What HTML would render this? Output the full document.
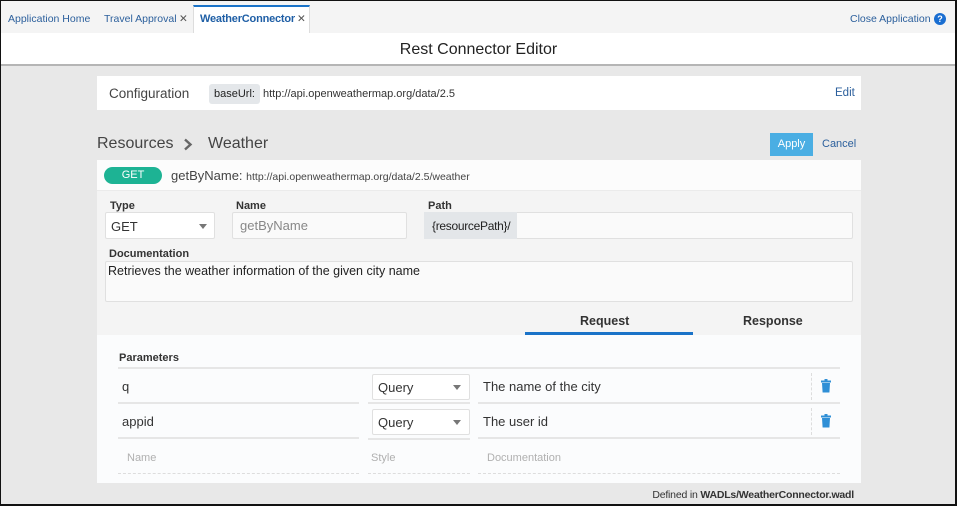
<!DOCTYPE html>
<html><head><style>
*{box-sizing:border-box;margin:0;padding:0}
body{width:957px;height:506px;overflow:hidden;font-family:"Liberation Sans",Arial,sans-serif;background:#e8e8e8;position:relative;color:#333}
.a{position:absolute;white-space:nowrap}
.frame{position:absolute;left:0;top:0;width:957px;height:506px;border:1px solid #111;border-right-width:2px;border-bottom-width:2px;pointer-events:none}
.tabs{left:0;top:0;width:957px;height:33px;background:#f4f4f4}
.tab{position:absolute;top:13px;font-size:10.5px;color:#2b5f9c;white-space:nowrap}
.inp{position:absolute;background:#fafafa;border:1px solid #e0e0e0;border-radius:2px;font-size:13px;padding-left:7px;white-space:nowrap}
.lbl{position:absolute;font-size:11px;font-weight:bold;color:#333}
.caret{position:absolute;width:0;height:0;border-left:4px solid transparent;border-right:4px solid transparent;border-top:5px solid #777}
.line{position:absolute;height:2px;background:#e6e6e6}
.ph{position:absolute;font-size:11px;color:#b0b0b0}
.dash{position:absolute;border-top:1px dashed #ddd;height:0}
</style></head><body>
<div class="a tabs"></div>
<div class="tab" style="left:8px">Application Home</div>
<div class="tab" style="left:104px">Travel Approval</div>
<div class="tab" style="left:179px;color:#555">✕</div>
<div class="a" style="left:193px;top:5px;width:117px;height:29px;background:#fff;border-top:2px solid #1a73c8;border-left:1px solid #ddd;border-right:1px solid #ddd"></div>
<div class="tab" style="left:200px;font-weight:bold;color:#1f5fa6;font-size:11px;letter-spacing:-0.2px">WeatherConnector</div>
<div class="tab" style="left:297px;color:#555">✕</div>
<div class="tab" style="left:850px">Close Application</div>
<div class="a" style="left:934px;top:13px;width:12px;height:12px;border-radius:50%;background:#1a6ed1;color:#fff;font-size:9px;font-weight:bold;text-align:center;line-height:12px">?</div>
<div class="a" style="left:0;top:33px;width:957px;height:33px;background:#fff;border-bottom:2px solid #b5b5b5"></div>
<div class="a" style="left:0;top:41px;width:957px;text-align:center;font-size:16px;color:#222">Rest Connector Editor</div>

<div class="a" style="left:97px;top:76px;width:764px;height:34px;background:#fff"></div>
<div class="a" style="left:109px;top:86px;font-size:13.5px;color:#444">Configuration</div>
<div class="a" style="left:209px;top:84px;width:51px;height:20px;background:#e4e7ea;border-radius:3px;font-size:11px;color:#222;padding:4px 0 0 5px">baseUrl:</div>
<div class="a" style="left:263px;top:88px;font-size:11px;color:#333">http://api.openweathermap.org/data/2.5</div>
<div class="a" style="left:835px;top:87px;font-size:11.5px;color:#2b5f9c">Edit</div>

<div class="a" style="left:97px;top:135px;font-size:16px;color:#444">Resources</div>
<svg class="a" style="left:183px;top:138px" width="10" height="13" viewBox="0 0 10 13"><path d="M2 1.5l5.5 5-5.5 5" fill="none" stroke="#666" stroke-width="2.4"/></svg>
<div class="a" style="left:208px;top:135px;font-size:16px;color:#444">Weather</div>
<div class="a" style="left:770px;top:133px;width:43px;height:23px;background:#4aaee3;color:#fff;font-size:11px;text-align:center;line-height:23px">Apply</div>
<div class="a" style="left:822px;top:138px;font-size:11px;color:#2b5f9c">Cancel</div>

<div class="a" style="left:97px;top:160px;width:764px;height:30px;background:#fcfcfc"></div>
<div class="a" style="left:104px;top:167px;width:58px;height:17px;border-radius:9px;background:#1db394;color:#fff;font-size:11px;text-align:center;line-height:17px">GET</div>
<div class="a" style="left:171px;top:168px;font-size:13px;color:#444">getByName: <span style="font-size:10.5px">http://api.openweathermap.org/data/2.5/weather</span></div>

<div class="a" style="left:97px;top:190px;width:764px;height:145px;background:#f4f4f4;border-top:1px solid #ebebeb"></div>
<div class="lbl" style="left:110px;top:200px">Type</div>
<div class="lbl" style="left:236px;top:200px">Name</div>
<div class="lbl" style="left:428px;top:200px">Path</div>
<div class="inp" style="left:105px;top:212px;width:110px;height:27px;background:#fff;line-height:27px;padding-left:5px">GET</div>
<div class="caret" style="left:199px;top:224px"></div>
<div class="inp" style="left:232px;top:212px;width:175px;height:27px;color:#888;line-height:25px">getByName</div>
<div class="inp" style="left:424px;top:212px;width:429px;height:27px"></div>
<div class="a" style="left:424px;top:212px;width:93px;height:27px;background:#e3e6e9;font-size:12px;color:#222;padding:7px 0 0 8px;letter-spacing:-0.3px">{resourcePath}/</div>
<div class="lbl" style="left:109px;top:248px">Documentation</div>
<div class="inp" style="left:105px;top:261px;width:748px;height:41px;padding:2px 0 0 2px;color:#222;font-size:12.5px">Retrieves the weather information of the given city name</div>
<div class="a" style="left:580px;top:314px;font-size:12.5px;font-weight:bold;color:#333">Request</div>
<div class="a" style="left:743px;top:314px;font-size:12.5px;font-weight:bold;color:#333">Response</div>
<div class="a" style="left:525px;top:332px;width:168px;height:3px;background:#1a73c8"></div>

<div class="a" style="left:97px;top:335px;width:764px;height:148px;background:#fbfcfd"></div>
<div class="lbl" style="left:119px;top:352px;font-size:11px">Parameters</div>
<div class="line" style="left:118px;top:367px;width:722px"></div>
<div class="a" style="left:122px;top:379px;font-size:13px">q</div>
<div class="line" style="left:118px;top:402px;width:241px"></div>
<div class="line" style="left:368px;top:402px;width:102px"></div>
<div class="line" style="left:478px;top:402px;width:362px"></div>
<div class="inp" style="left:372px;top:374px;width:98px;height:26px;background:#fff;line-height:26px;padding-left:5px">Query</div>
<div class="caret" style="left:453px;top:385px"></div>
<div class="a" style="left:483px;top:379px;font-size:13px">The name of the city</div>
<div class="a" style="left:122px;top:414px;font-size:13px">appid</div>
<div class="line" style="left:118px;top:437px;width:241px"></div>
<div class="line" style="left:368px;top:438px;width:102px"></div>
<div class="line" style="left:478px;top:437px;width:362px"></div>
<div class="inp" style="left:372px;top:409px;width:98px;height:26px;background:#fff;line-height:26px;padding-left:5px">Query</div>
<div class="caret" style="left:453px;top:420px"></div>
<div class="a" style="left:483px;top:414px;font-size:13px">The user id</div>
<div class="a" style="left:811px;top:373px;height:27px;border-left:1px dashed #ddd"></div>
<div class="a" style="left:811px;top:408px;height:27px;border-left:1px dashed #ddd"></div>
<svg class="a" style="left:821px;top:379px" width="10" height="14" viewBox="0 0 10 14"><rect x="3.5" y="0" width="3" height="2" fill="#2f8fd6"/><rect x="0" y="1.5" width="10" height="2" fill="#2f8fd6"/><path d="M1 4h8l-.6 9.5H1.6z" fill="#2f8fd6"/></svg>
<svg class="a" style="left:821px;top:414px" width="10" height="14" viewBox="0 0 10 14"><rect x="3.5" y="0" width="3" height="2" fill="#2f8fd6"/><rect x="0" y="1.5" width="10" height="2" fill="#2f8fd6"/><path d="M1 4h8l-.6 9.5H1.6z" fill="#2f8fd6"/></svg>
<div class="ph" style="left:127px;top:452px">Name</div>
<div class="ph" style="left:371px;top:452px">Style</div>
<div class="ph" style="left:487px;top:452px">Documentation</div>
<div class="dash" style="left:118px;top:473px;width:241px"></div>
<div class="dash" style="left:368px;top:473px;width:102px"></div>
<div class="dash" style="left:478px;top:473px;width:362px"></div>

<div class="a" style="right:103px;top:489px;font-size:10.5px;color:#333;letter-spacing:-0.2px">Defined in <b>WADLs/WeatherConnector.wadl</b></div>
<div class="frame"></div>
</body></html>
